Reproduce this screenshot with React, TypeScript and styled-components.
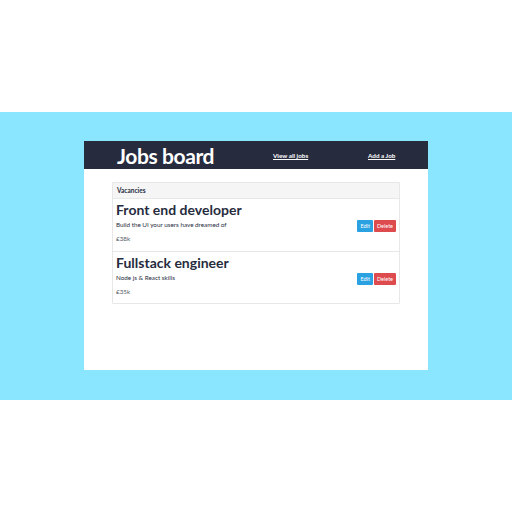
import React from "react";
import styled, { createGlobalStyle } from "styled-components";

/** ===========================================================================
 * Global
 * ============================================================================
 */
const GlobalStyle = createGlobalStyle`
  html, body {
    margin: 0;
    padding: 0;
    background: #ffffff;
    font-family: Lato, "Open Sans", sans-serif;
  }
`;

const COLORS = {
  SKY: "#8ae6fe",
  NAV: "#262b3e",
  TEXT: "#262b3e",
  MUTED: "#555a66",
  BORDER: "#e7e7e7",
  HEADER: "#f5f5f5",
  EDIT: "#2aa2e2",
  DELETE: "#de4b4f",
};

interface Job {
  title: string;
  description: string;
  salary: string;
}

const JOBS: Job[] = [
  {
    title: "Front end developer",
    description: "Build the UI your users have dreamed of",
    salary: "£38k",
  },
  {
    title: "Fullstack engineer",
    description: "Node js & React skills",
    salary: "£35k",
  },
];

/** ===========================================================================
 * Layout
 * ============================================================================
 */
const Page = styled.div`
  width: 512px;
  height: 512px;
  padding-top: 112px;
  box-sizing: border-box;
`;

const Band = styled.div`
  height: 288px;
  background: ${COLORS.SKY};
  padding: 29px 0 0 84px;
  box-sizing: border-box;
`;

const Frame = styled.div`
  width: 344px;
  height: 229px;
  background: #ffffff;
  display: flex;
  flex-direction: column;
`;

/** ===========================================================================
 * Nav
 * ============================================================================
 */
const NavBar = styled.div`
  height: 28px;
  background: ${COLORS.NAV};
  display: flex;
  align-items: center;
  padding-left: 33px;
`;

const Brand = styled.h1`
  margin: 0;
  width: 156px;
  color: #ffffff;
  font-size: 21px;
  font-weight: 700;
  letter-spacing: -0.4px;
  line-height: 1;
`;

const NavLink = styled.a<{ $width: number }>`
  width: ${(p) => p.$width}px;
  color: #ffffff;
  font-size: 6.3px;
  font-weight: 700;
  text-decoration: underline;
  margin-top: 1px;
`;

/** ===========================================================================
 * List
 * ============================================================================
 */
const Content = styled.div`
  padding: 13px 28px 0 28px;
`;

const Card = styled.div`
  border: 1px solid ${COLORS.BORDER};
  border-radius: 1px;
`;

const CardHeader = styled.div`
  height: 15px;
  background: ${COLORS.HEADER};
  border-bottom: 1px solid ${COLORS.BORDER};
  padding-left: 4px;
  display: flex;
  align-items: center;
  font-size: 6.5px;
  font-weight: 700;
  color: ${COLORS.TEXT};
`;

const Item = styled.div`
  height: 52px;
  box-sizing: border-box;
  display: flex;
  align-items: center;
  padding: 0 3px 0 3px;

  & + & {
    border-top: 1px solid ${COLORS.BORDER};
  }
`;

const ItemBody = styled.div`
  flex: 1;
  align-self: flex-start;
  padding-top: 2px;
`;

const ItemTitle = styled.h2`
  margin: 0;
  font-size: 14px;
  font-weight: 700;
  line-height: 17px;
  color: ${COLORS.TEXT};
`;

const ItemText = styled.p<{ $muted?: boolean }>`
  margin: ${(p) => (p.$muted ? "5px 0 0" : "2px 0 0")};
  font-size: 6.3px;
  line-height: 9px;
  color: ${(p) => (p.$muted ? COLORS.MUTED : COLORS.TEXT)};
`;

const Actions = styled.div`
  display: flex;
  gap: 1px;
  margin-top: 2px;
`;

const ActionButton = styled.button<{ $color: string }>`
  height: 12px;
  padding: 0 3px;
  border: none;
  border-radius: 1px;
  background: ${(p) => p.$color};
  color: #ffffff;
  font-family: Lato, sans-serif;
  font-size: 5.5px;
  line-height: 12px;
`;

export default function App() {
  return (
    <Page>
      <GlobalStyle />
      <Band>
        <Frame>
          <NavBar>
            <Brand>Jobs board</Brand>
            <NavLink $width={95}>View all jobs</NavLink>
            <NavLink $width={40}>Add a Job</NavLink>
          </NavBar>
          <Content>
            <Card>
              <CardHeader>Vacancies</CardHeader>
              {JOBS.map((job) => (
                <Item key={job.title}>
                  <ItemBody>
                    <ItemTitle>{job.title}</ItemTitle>
                    <ItemText>{job.description}</ItemText>
                    <ItemText $muted>{job.salary}</ItemText>
                  </ItemBody>
                  <Actions>
                    <ActionButton $color={COLORS.EDIT}>Edit</ActionButton>
                    <ActionButton $color={COLORS.DELETE}>Delete</ActionButton>
                  </Actions>
                </Item>
              ))}
            </Card>
          </Content>
        </Frame>
      </Band>
    </Page>
  );
}
